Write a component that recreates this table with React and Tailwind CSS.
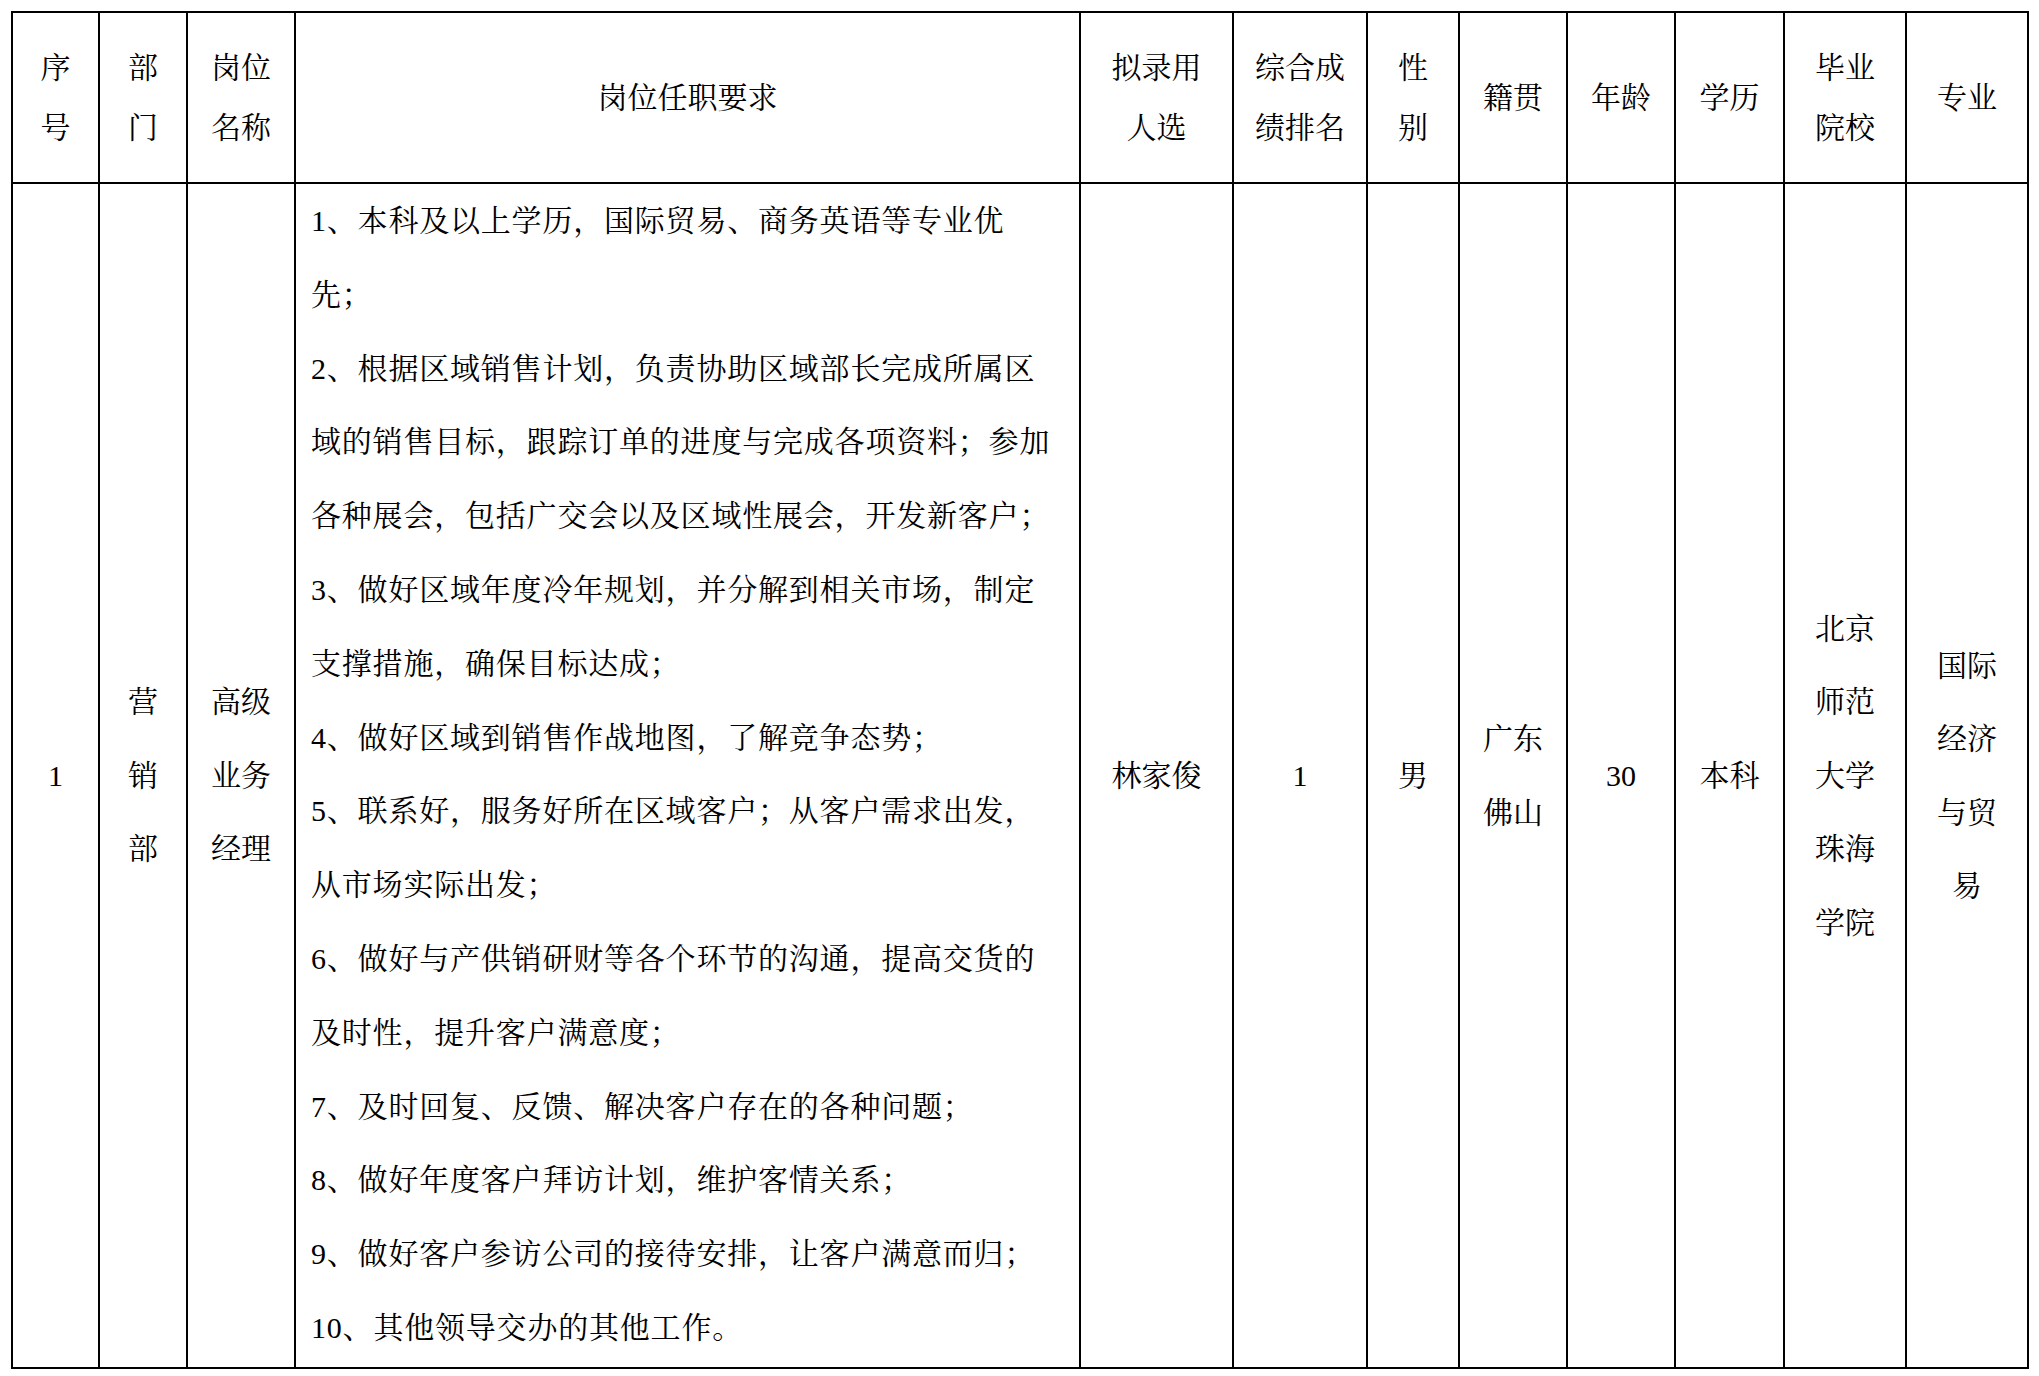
const HEADERS = [
  ['序', '号'],
  ['部', '门'],
  ['岗位', '名称'],
  ['岗位任职要求'],
  ['拟录用', '人选'],
  ['综合成', '绩排名'],
  ['性', '别'],
  ['籍贯'],
  ['年龄'],
  ['学历'],
  ['毕业', '院校'],
  ['专业'],
]

const DUTIES = [
  '1、本科及以上学历，国际贸易、商务英语等专业优',
  '先；',
  '2、根据区域销售计划，负责协助区域部长完成所属区',
  '域的销售目标，跟踪订单的进度与完成各项资料；参加',
  '各种展会，包括广交会以及区域性展会，开发新客户；',
  '3、做好区域年度冷年规划，并分解到相关市场，制定',
  '支撑措施，确保目标达成；',
  '4、做好区域到销售作战地图，了解竞争态势；',
  '5、联系好，服务好所在区域客户；从客户需求出发，',
  '从市场实际出发；',
  '6、做好与产供销研财等各个环节的沟通，提高交货的',
  '及时性，提升客户满意度；',
  '7、及时回复、反馈、解决客户存在的各种问题；',
  '8、做好年度客户拜访计划，维护客情关系；',
  '9、做好客户参访公司的接待安排，让客户满意而归；',
  '10、其他领导交办的其他工作。',
]

const ROW = [
  ['1'],
  ['营', '销', '部'],
  ['高级', '业务', '经理'],
  null,
  ['林家俊'],
  ['1'],
  ['男'],
  ['广东', '佛山'],
  ['30'],
  ['本科'],
  ['北京', '师范', '大学', '珠海', '学院'],
  ['国际', '经济', '与贸', '易'],
]

function Cell({ lines, leading }) {
  return (
    <div className="flex flex-col items-center justify-center border-r-2 border-b-2 border-black text-center">
      {lines.map((l, i) => (
        <div key={i} className={`whitespace-nowrap ${leading}`}>
          {l}
        </div>
      ))}
    </div>
  )
}

export default function App() {
  return (
    <div className="min-h-screen bg-white text-black font-['Liberation_Serif','Noto_Serif_CJK_SC','Noto_Sans_CJK_SC',serif] text-[30px]">
      <div className="ml-[11px] mt-[11px] w-fit grid grid-cols-[87px_88px_108px_785px_153px_134px_92px_108px_108px_109px_122px_122px] grid-rows-[171px_1185px] border-l-2 border-t-2 border-black">
        {HEADERS.map((h, i) => (
          <Cell key={'h' + i} lines={h} leading="leading-[60px]" />
        ))}
        {ROW.map((c, i) =>
          c ? (
            <Cell key={'b' + i} lines={c} leading="leading-[73.5px]" />
          ) : (
            <div key={'b' + i} className="border-r-2 border-b-2 border-black pl-[15px] tracking-[0.8px]">
              {DUTIES.map((d, j) => (
                <div key={j} className="whitespace-nowrap leading-[73.8px]">
                  {d}
                </div>
              ))}
            </div>
          )
        )}
      </div>
    </div>
  )
}
